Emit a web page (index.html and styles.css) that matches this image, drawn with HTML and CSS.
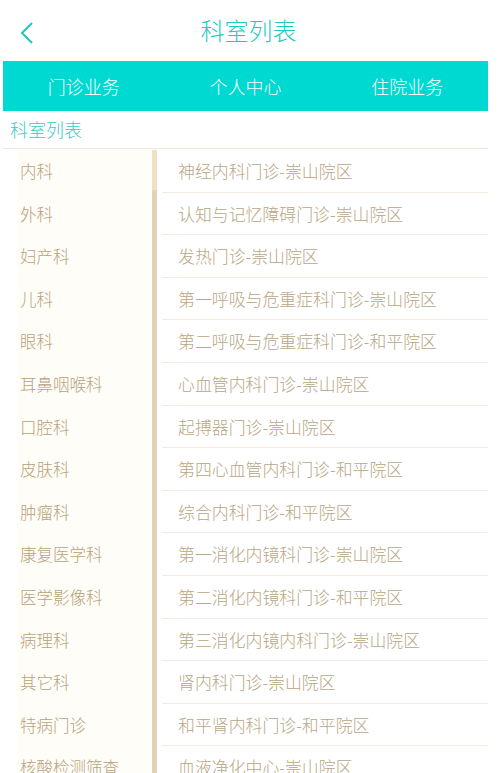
FILE: index.html
```html
<!DOCTYPE html>
<html lang="zh-CN">

<head>
  <meta charset="UTF-8">
  <meta name="viewport" content="width=device-width, initial-scale=1.0">
  <title>科室列表</title>
  <link rel="stylesheet" href="styles.css">
</head>

<body>
  <div class="page">
    <div class="header">
      <a class="back" href="#">
        <svg width="14" height="24" viewBox="0 0 14 24">
          <polyline points="12,2 2,12 12,22" fill="none" stroke="#1ec9bd" stroke-width="2" />
        </svg>
      </a>
      <h1 class="title">科室列表</h1>
    </div>
    <div class="tabs">
      <span>门诊业务</span>
      <span>个人中心</span>
      <span>住院业务</span>
    </div>
    <div class="sub">科室列表</div>
    <div class="content">
      <ul class="cate">
        <li class="active">内科</li>
        <li>外科</li>
        <li>妇产科</li>
        <li>儿科</li>
        <li>眼科</li>
        <li>耳鼻咽喉科</li>
        <li>口腔科</li>
        <li>皮肤科</li>
        <li>肿瘤科</li>
        <li>康复医学科</li>
        <li>医学影像科</li>
        <li>病理科</li>
        <li>其它科</li>
        <li>特病门诊</li>
        <li>核酸检测筛查</li>
      </ul>
      <div class="bar"><i></i></div>
      <ul class="dept">
        <li>神经内科门诊-崇山院区</li>
        <li>认知与记忆障碍门诊-崇山院区</li>
        <li>发热门诊-崇山院区</li>
        <li>第一呼吸与危重症科门诊-崇山院区</li>
        <li>第二呼吸与危重症科门诊-和平院区</li>
        <li>心血管内科门诊-崇山院区</li>
        <li>起搏器门诊-崇山院区</li>
        <li>第四心血管内科门诊-和平院区</li>
        <li>综合内科门诊-和平院区</li>
        <li>第一消化内镜科门诊-崇山院区</li>
        <li>第二消化内镜科门诊-和平院区</li>
        <li>第三消化内镜内科门诊-崇山院区</li>
        <li>肾内科门诊-崇山院区</li>
        <li>和平肾内科门诊-和平院区</li>
        <li>血液净化中心-崇山院区</li>
      </ul>
    </div>
  </div>
</body>

</html>
```

FILE: styles.css
```css
* {
  box-sizing: border-box;
}

body {
  margin: 0;
  background: #fff;
  font-family: "Noto Sans CJK SC", "Noto Sans", sans-serif;
  font-weight: 300;
  overflow: hidden;
}

ul {
  margin: 0;
  padding: 0;
  list-style: none;
}

.page {
  width: 485px;
  margin-left: 3px;
}

.header {
  height: 61px;
  display: flex;
  align-items: center;
  justify-content: center;
  position: relative;
}

.header .back {
  position: absolute;
  left: 17px;
  top: 21px;
  display: flex;
}

.header .title {
  margin: 0;
  font-size: 24px;
  font-weight: 300;
  color: #1ec9bd;
  padding-left: 6px;
  padding-bottom: 2px;
}

.tabs {
  height: 50px;
  background: #00d9d1;
  display: flex;
  align-items: center;
}

.tabs span {
  flex: 1;
  text-align: center;
  color: #fff;
  font-size: 18px;
}

.sub {
  height: 38px;
  line-height: 37px;
  padding-left: 7px;
  font-size: 18px;
  color: #3cc9c0;
  border-bottom: 1px solid #f2e8d6;
}

.content {
  display: flex;
  padding-top: 1px;
}

.cate {
  width: 149px;
  background: linear-gradient(to right, #fff 14px, #fffdf8 14px);
}

.cate li {
  height: 42.6px;
  line-height: 42.6px;
  padding-left: 17px;
  font-size: 16.5px;
  color: #b8a27a;
}

.bar {
  width: 5px;
  background: #e2d3b8;
}

.bar i {
  display: block;
  height: 40px;
  background: #f0e1c6;
}

.dept {
  flex: 1;
  margin-left: 5px;
}

.dept li {
  height: 42.6px;
  line-height: 41.6px;
  padding-left: 16px;
  font-size: 16.9px;
  color: #b9a684;
  border-bottom: 1px solid #f3ebdd;
}
```
